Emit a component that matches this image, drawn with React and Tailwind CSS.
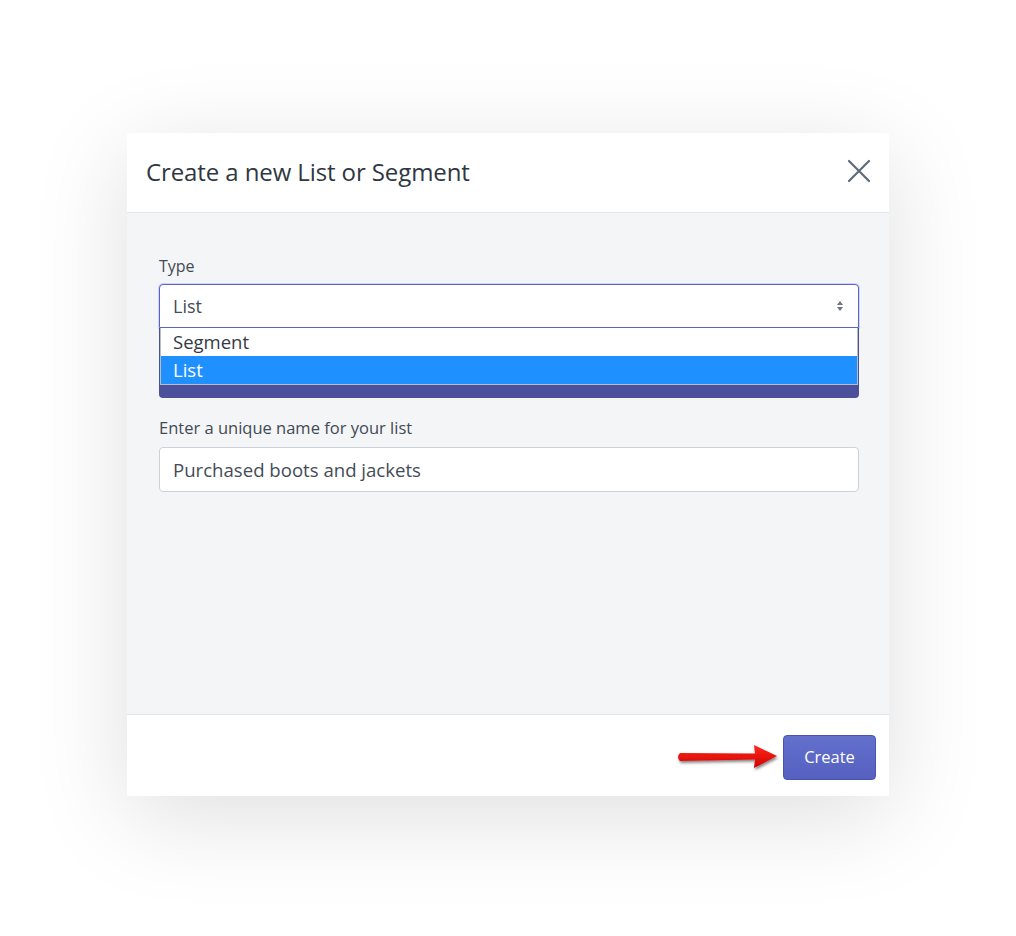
import React from "react";

export default function App() {
  return (
    <div
      className="w-[1016px] h-[936px] bg-white relative overflow-hidden"
      style={{ fontFamily: '"Open Sans", "Noto Sans", sans-serif' }}
    >
      <div className="pt-[133px] pl-[127px]">
        <div className="w-[762px] h-[663px] flex flex-col bg-white shadow-[0_20px_90px_rgba(0,0,0,0.13)]">
          {/* Header */}
          <div className="h-[80px] flex items-center justify-between pl-[19px] pr-[19px] border-b border-[#e2e5ea]">
            <h2 className="text-[24px] text-[#2f3742] tracking-[-0.1px] mt-[-1px]">Create a new List or Segment</h2>
            <svg width="24" height="24" viewBox="0 0 24 24" className="mt-[-4px] mr-[-1px]">
              <path d="M2 2 L22 22 M22 2 L2 22" stroke="#5f6b78" strokeWidth="2.2" strokeLinecap="round" />
            </svg>
          </div>

          {/* Body */}
          <div className="flex-1 bg-[#f4f5f7] pl-[32px] pr-[30px] pt-[42px]">
            <label className="block text-[16px] text-[#414a55] leading-[22px] mb-[7px]">Type</label>
            <div className="relative">
              <div className="h-[44px] bg-white border border-[#5a63c8] rounded-t-[4px] shadow-[0_0_0_1px_rgba(127,156,245,0.35)] flex items-center justify-between pl-[13px] pr-[14px]">
                <span className="text-[18px] text-[#444c57]">List</span>
                <svg width="8" height="14" viewBox="0 0 8 14">
                  <path d="M4 2 L7 6 L1 6 Z" fill="#6b7480" />
                  <path d="M4 12 L7 8 L1 8 Z" fill="#6b7480" />
                </svg>
              </div>
              <div className="h-[70px] bg-[#4c4f99] rounded-b-[4px]" />
              <div className="absolute left-[1px] right-[1px] top-[44px] bg-white border border-[#b8bcc4] border-t-0">
                <div className="h-[28px] flex items-center pl-[12px] text-[18.5px] text-[#333a44]">Segment</div>
                <div className="h-[28px] flex items-center pl-[12px] text-[18.5px] text-white bg-[#1e90ff]">List</div>
              </div>
            </div>

            <label className="block text-[16.5px] text-[#414a55] leading-[22px] mt-[19px] mb-[8px]">
              Enter a unique name for your list
            </label>
            <div className="h-[45px] bg-white border border-[#cdd2da] rounded-[4px] flex items-center pl-[13px]">
              <span className="text-[18.6px] text-[#444c57]">Purchased boots and jackets</span>
            </div>
          </div>

          {/* Footer */}
          <div className="h-[82px] border-t border-[#e2e5ea] bg-white flex items-start justify-end pr-[13px] pt-[20px]">
            <svg width="112" height="34" viewBox="0 0 112 34" className="mt-[5px] mr-[-6px]">
              <defs>
                <filter id="sh" x="-20%" y="-50%" width="140%" height="200%">
                  <feDropShadow dx="1" dy="2" stdDeviation="1.5" floodColor="#000" floodOpacity="0.5" />
                </filter>
                <linearGradient id="rg" x1="0" y1="0" x2="0" y2="1">
                  <stop offset="0" stopColor="#ff2a1a" />
                  <stop offset="1" stopColor="#d00000" />
                </linearGradient>
              </defs>
              <g filter="url(#sh)">
                <path
                  d="M5 13 Q1 17 5 21 L80 19.5 L79 28 L102 16 L79 5 L80 13.5 Z"
                  fill="url(#rg)"
                />
              </g>
            </svg>
            <button className="w-[93px] h-[45px] rounded-[4px] bg-gradient-to-b from-[#6470cc] to-[#5560c0] border border-[#4a53ad] text-white text-[16.5px] ml-[2px]">
              Create
            </button>
          </div>
        </div>
      </div>
    </div>
  );
}
